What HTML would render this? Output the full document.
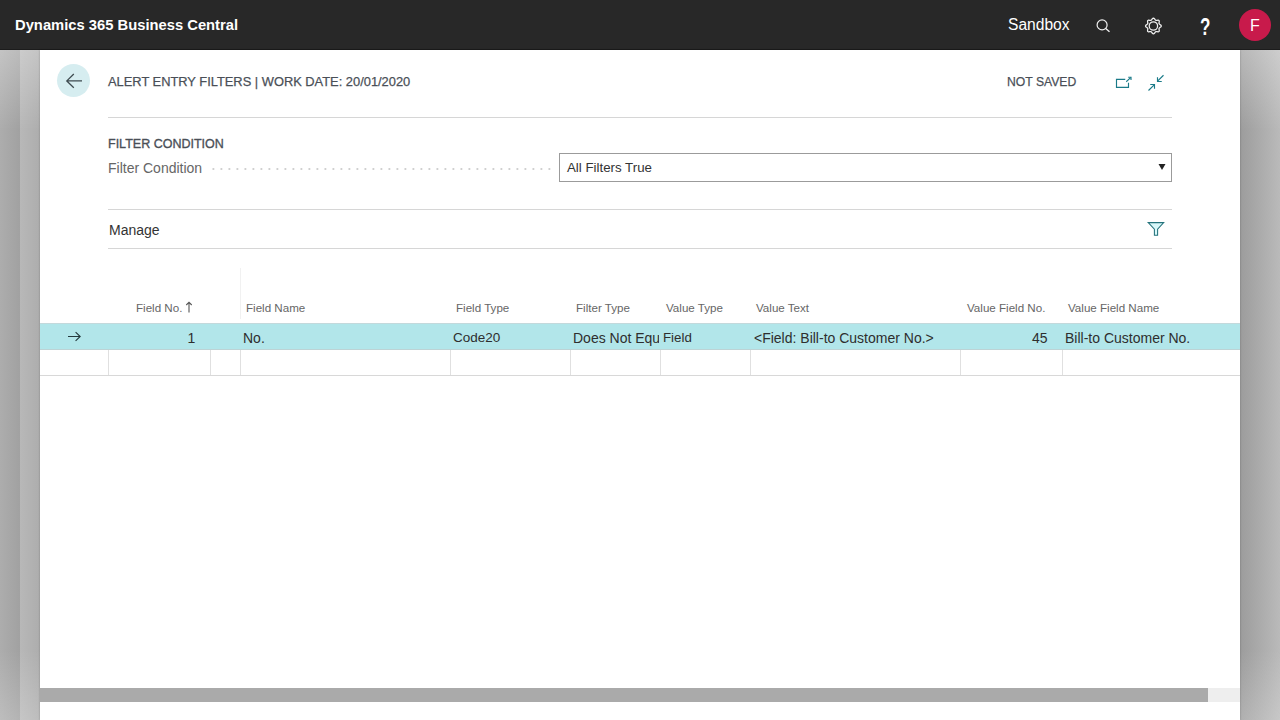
<!DOCTYPE html>
<html><head><meta charset="utf-8">
<style>
*{margin:0;padding:0;box-sizing:border-box}
html,body{width:1280px;height:720px;overflow:hidden;background:#fff;font-family:"Liberation Sans",sans-serif}
.abs{position:absolute}
#bar{left:0;top:0;width:1280px;height:50px;background:#282828;border-bottom:1px solid #1c1c1c}
#brand{left:15px;top:16px;color:#fff;font-weight:bold;font-size:15.5px;white-space:nowrap;transform:scaleX(0.952);transform-origin:0 0}
#sandbox{left:1008px;top:16px;color:#fff;font-size:15.6px}
#avatar{left:1239px;top:9px;width:32px;height:32px;border-radius:50%;background:#c81a4b;color:#fff;font-size:16px;text-align:center;line-height:34px}
#lg1{left:0;top:50px;width:20px;height:670px;background:linear-gradient(to right,#adadad,#a1a1a1)}
#lg2{left:20px;top:50px;width:20px;height:670px;background:linear-gradient(to right,#b8b8b8,#adadad)}
#rg{left:1240px;top:50px;width:40px;height:670px;background:linear-gradient(to right,#9c9c9c,#bababa)}
#vov{left:0;top:50px;width:1280px;height:670px;background:linear-gradient(to bottom,rgba(255,255,255,0.28) 0px,rgba(255,255,255,0) 80px,rgba(255,255,255,0) 600px,rgba(255,255,255,0.2) 670px)}
#panel{left:40px;top:50px;width:1200px;height:670px;background:#fff}
.t{position:absolute;white-space:nowrap}
.hdr{color:#4a4f57;font-size:13.7px;-webkit-text-stroke:0.25px #4a4f57;transform-origin:0 0}
.hl{position:absolute;height:1px;background:#d6d6d6}
.ch{position:absolute;top:300.5px;color:#666;font-size:11.6px;white-space:nowrap}
.cell{position:absolute;top:329.5px;color:#2e2e2e;font-size:14px;white-space:nowrap}
.vl{position:absolute;width:1px;background:#e0e0e0}
</style></head><body>
<div id="bar" class="abs"></div>
<div id="brand" class="abs">Dynamics 365 Business Central</div>
<div id="sandbox" class="abs">Sandbox</div>
<svg class="abs" style="left:1090px;top:13px" width="26" height="26" viewBox="0 0 26 26"><circle cx="12.1" cy="11.9" r="5.0" fill="none" stroke="#f0f0f0" stroke-width="1.2"/><line x1="15.7" y1="15.5" x2="19.5" y2="18.8" stroke="#f0f0f0" stroke-width="1.3"/></svg>
<svg class="abs" style="left:1141px;top:14px" width="24" height="24" viewBox="0 0 24 24"><path d="M12.40 4.15 L12.91 4.29 L13.36 4.69 L13.75 5.23 L14.09 5.70 L14.41 6.09 L14.75 6.33 L15.16 6.40 L15.66 6.35 L16.23 6.26 L16.89 6.15 L17.49 6.19 L17.95 6.45 L18.21 6.91 L18.25 7.51 L18.14 8.17 L18.05 8.74 L18.00 9.24 L18.07 9.65 L18.31 9.99 L18.70 10.31 L19.17 10.65 L19.71 11.04 L20.11 11.49 L20.25 12.00 L20.11 12.51 L19.71 12.96 L19.17 13.35 L18.70 13.69 L18.31 14.01 L18.07 14.35 L18.00 14.76 L18.05 15.26 L18.14 15.83 L18.25 16.49 L18.21 17.09 L17.95 17.55 L17.49 17.81 L16.89 17.85 L16.23 17.74 L15.66 17.65 L15.16 17.60 L14.75 17.67 L14.41 17.91 L14.09 18.30 L13.75 18.77 L13.36 19.31 L12.91 19.71 L12.40 19.85 L11.89 19.71 L11.44 19.31 L11.05 18.77 L10.71 18.30 L10.39 17.91 L10.05 17.67 L9.64 17.60 L9.14 17.65 L8.57 17.74 L7.91 17.85 L7.31 17.81 L6.85 17.55 L6.59 17.09 L6.55 16.49 L6.66 15.83 L6.75 15.26 L6.80 14.76 L6.73 14.35 L6.49 14.01 L6.10 13.69 L5.63 13.35 L5.09 12.96 L4.69 12.51 L4.55 12.00 L4.69 11.49 L5.09 11.04 L5.63 10.65 L6.10 10.31 L6.49 9.99 L6.73 9.65 L6.80 9.24 L6.75 8.74 L6.66 8.17 L6.55 7.51 L6.59 6.91 L6.85 6.45 L7.31 6.19 L7.91 6.15 L8.57 6.26 L9.14 6.35 L9.64 6.40 L10.05 6.33 L10.39 6.09 L10.71 5.70 L11.05 5.23 L11.44 4.69 L11.89 4.29Z" fill="none" stroke="#f0f0f0" stroke-width="1.25" stroke-linejoin="round"/><circle cx="12.4" cy="12" r="4.2" fill="none" stroke="#f0f0f0" stroke-width="1.25"/></svg>
<div class="t" style="left:1200px;top:14px;color:#fff;font-weight:bold;font-size:23px;transform:scaleX(0.74);transform-origin:0 0;width:16px">?</div>
<div id="avatar" class="abs">F</div>

<div id="lg1" class="abs"></div>
<div id="lg2" class="abs"></div>
<div id="rg" class="abs"></div>
<div id="vov" class="abs"></div>
<div id="panel" class="abs" style="box-shadow:0 0 2px rgba(0,0,0,0.25)"></div>

<!-- back button -->
<div class="abs" style="left:57px;top:64px;width:33px;height:33px;border-radius:50%;background:#d6edf0"></div>
<svg class="abs" style="left:60px;top:68px" width="28" height="26" viewBox="0 0 28 26"><path d="M6.8 12.9H22M13.8 6L6.8 12.9 13.8 19.8" fill="none" stroke="#3d4a4f" stroke-width="1.3"/></svg>

<div class="t hdr" style="left:108px;top:74px;transform:scaleX(0.94)">ALERT ENTRY FILTERS | WORK DATE: 20/01/2020</div>
<div class="t hdr" style="left:1007px;top:74px;transform:scaleX(0.89)">NOT SAVED</div>
<!-- open new icon -->
<svg class="abs" style="left:1110px;top:70px" width="26" height="24" viewBox="0 0 26 24"><path d="M15.25 9.4H6.5V17.4H18.5V12.75" fill="none" stroke="#1a7a88" stroke-width="1.15"/><path d="M16.25 11.75L20.6 7.6" fill="none" stroke="#1a7a88" stroke-width="1.1"/><path d="M18.2 7.2H21V10" fill="none" stroke="#1a7a88" stroke-width="1.15"/></svg>
<!-- collapse icon -->
<svg class="abs" style="left:1143px;top:70px" width="26" height="24" viewBox="0 0 26 24"><path d="M20.5 5.25L14.8 10.9M14.5 7.25V11.5H18.75M5.5 20.5L11.2 14.8M7.25 14.5H11.5V18.75" fill="none" stroke="#1a7a88" stroke-width="1.15"/></svg>

<div class="hl" style="left:108px;top:117px;width:1064px"></div>
<div class="t hdr" style="left:108px;top:136px;transform:scaleX(0.914);-webkit-text-stroke:0.35px #4a4f57">FILTER CONDITION</div>
<div class="t" style="left:108px;top:160px;color:#666;font-size:14px">Filter Condition</div>
<svg class="abs" style="left:208px;top:166px" width="346" height="6"><line x1="4.5" y1="3" x2="346" y2="3" stroke="#d0d0d0" stroke-width="2" stroke-dasharray="1.8 6.2"/></svg>
<div class="abs" style="left:559px;top:153px;width:613px;height:29px;border:1px solid #9b9b9b;background:#fff"></div>
<div class="t" style="left:567px;top:160px;color:#333;font-size:13.3px">All Filters True</div>
<svg class="abs" style="left:1158px;top:163px" width="8" height="8" viewBox="0 0 8 8"><path d="M0.5 1h7L4 7z" fill="#222"/></svg>

<div class="hl" style="left:108px;top:209px;width:1064px"></div>
<div class="t" style="left:109px;top:222px;color:#333;font-size:14px">Manage</div>
<svg class="abs" style="left:1146px;top:220px" width="20" height="18" viewBox="0 0 20 18"><path d="M2.2 2.6H17.7L11.6 9.1V15.3H8.4V9.1Z" fill="#d9f8fa" stroke="#24737c" stroke-width="1.05" stroke-linejoin="miter"/></svg>
<div class="hl" style="left:108px;top:248px;width:1064px"></div>

<!-- table header -->
<div class="vl" style="left:240px;top:268px;height:51px;background:#f1f1f1"></div>
<div class="ch" style="left:136px">Field No.</div>
<svg class="abs" style="left:185px;top:301px" width="8" height="12" viewBox="0 0 8 12"><path d="M4 1.2V11.5M1.3 4L4 1.2 6.7 4" fill="none" stroke="#555" stroke-width="1.1"/></svg>
<div class="ch" style="left:246px">Field Name</div>
<div class="ch" style="left:456px">Field Type</div>
<div class="ch" style="left:576px">Filter Type</div>
<div class="ch" style="left:666px">Value Type</div>
<div class="ch" style="left:756px">Value Text</div>
<div class="ch" style="left:967px">Value Field No.</div>
<div class="ch" style="left:1068px">Value Field Name</div>

<!-- row 1 -->
<div class="abs" style="left:40px;top:323px;width:1200px;height:27px;background:#b2e6ea;border-top:1px solid #c3d9dc;border-bottom:1px solid #bdd3d5"></div>
<svg class="abs" style="left:66px;top:330px" width="18" height="14" viewBox="0 0 18 14"><path d="M2 6.5H14.5M9.6 2.1l4.6 4.4-4.6 4.4" fill="none" stroke="#23393d" stroke-width="1.1"/></svg>
<div class="cell" style="left:187.5px">1</div>
<div class="cell" style="left:243px">No.</div>
<div class="cell" style="left:453px;font-size:13.5px;top:330px">Code20</div>
<div class="cell" style="left:573px;width:86px;overflow:hidden">Does Not Equal</div>
<div class="cell" style="left:663px;font-size:13.3px;top:330px">Field</div>
<div class="cell" style="left:754px">&lt;Field: Bill-to Customer No.&gt;</div>
<div class="cell" style="left:1032px">45</div>
<div class="cell" style="left:1065px">Bill-to Customer No.</div>

<!-- row 2 -->
<div class="hl" style="left:40px;top:375px;width:1200px;background:#d8d8d8"></div>
<div class="vl" style="left:108px;top:350px;height:25px"></div>
<div class="vl" style="left:210px;top:350px;height:25px"></div>
<div class="vl" style="left:240px;top:350px;height:25px"></div>
<div class="vl" style="left:450px;top:350px;height:25px"></div>
<div class="vl" style="left:570px;top:350px;height:25px"></div>
<div class="vl" style="left:660px;top:350px;height:25px"></div>
<div class="vl" style="left:750px;top:350px;height:25px"></div>
<div class="vl" style="left:960px;top:350px;height:25px"></div>
<div class="vl" style="left:1062px;top:350px;height:25px"></div>

<!-- scrollbar -->
<div class="abs" style="left:40px;top:688px;width:1200px;height:14px;background:#eeeeee"></div>
<div class="abs" style="left:40px;top:688px;width:1168px;height:14px;background:#aaaaaa"></div>
</body></html>
